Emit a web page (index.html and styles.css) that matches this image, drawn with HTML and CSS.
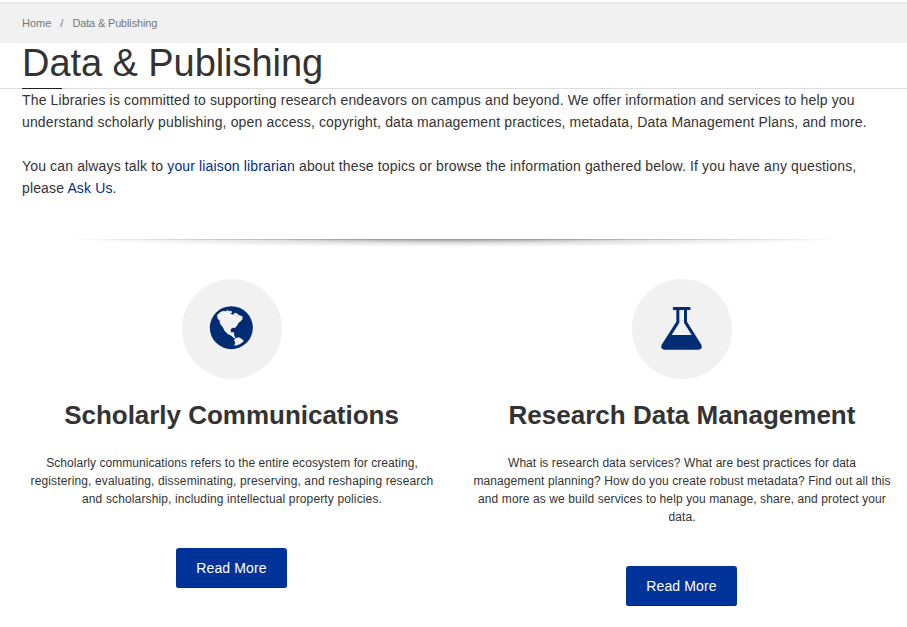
FILE: index.html
```
<!DOCTYPE html>
<html lang="en">
<head>
<meta charset="utf-8">
<title>Data &amp; Publishing</title>
<link rel="stylesheet" href="styles.css">
</head>
<body>
<nav class="breadcrumb"><a href="#">Home</a><span class="sep">/</span><span class="current">Data &amp; Publishing</span></nav>
<header class="page-title"><h1>Data &amp; Publishing</h1></header>
<main>
  <section class="intro">
    <p>The Libraries is committed to supporting research endeavors on campus and beyond. We offer information and services to help you<br>understand scholarly publishing, open access, copyright, data management practices, metadata, Data Management Plans, and more.</p>
    <p>You can always talk to <a href="#">your liaison librarian</a> about these topics or browse the information gathered below. If you have any questions,<br>please <a href="#">Ask Us</a>.</p>
  </section>
  <div class="divider"></div>
  <section class="cards">
    <article class="card">
      <div class="icon">
        <svg viewBox="0 0 150 150" width="50" height="50">
          <circle cx="76" cy="77" r="64.5" fill="#002c73"/>
          <path fill="#f1f1f1" d="M33 40 L43 30 L52 27 L59 28 L65 24 L70 28 L75 26 L79 31 L73 35 L82 38 L85 33 L92 33 L98 39 L109 43 L110 51 L104 58 L97 63 L94 70 L87 78 L80 77 L74 82 L75 91 L84 91 L85 102 L89 108 L84 109 L76 101 L66 97 L56 87 L50 75 L42 65 L41 56 L35 50 Z"/>
          <path fill="#f1f1f1" d="M88 109 L99 106 L111 113 L113 118 L106 124 L98 128 L88 131 L85 130 L88 121 L84 115 Z"/>
        </svg>
      </div>
      <h2 class="tight">Scholarly Communications</h2>
      <p><span class="snug">Scholarly communications refers to the entire ecosystem for creating,</span><br><span class="loose">registering, evaluating, disseminating, preserving, and reshaping research<br>and scholarship, including intellectual property policies.</span></p>
      <a class="button" href="#">Read More</a>
    </article>
    <article class="card">
      <div class="icon">
        <svg viewBox="0 0 150 150" width="50" height="50">
          <path fill="#002c73" fill-rule="evenodd" d="M54 15 H100 Q104 15 104 19.500 Q104 24 100 24 H93 V59 L136 128 Q141 142 127 143 H26 Q12 142 17 128 L61 59 V24 H54 Q50 24 50 19.500 Q50 15 54 15 Z M70 24 V62 L47 99 H107 L84 62 V24 Z"/>
        </svg>
      </div>
      <h2>Research Data Management</h2>
      <p><span class="snug">What is research data services? What are best practices for data</span><br>management planning? How do you create robust metadata? Find out all this<br>and more as we build services to help you manage, share, and protect your<br>data.</p>
      <a class="button" href="#">Read More</a>
    </article>
  </section>
</main>
</body>
</html>
```
FILE: styles.css
```
* { box-sizing: border-box; }
body {
  margin: 0;
  padding-top: 2px;
  background: #fff;
  color: #333;
  font-family: "Liberation Sans", Arial, sans-serif;
  overflow: hidden;
}
a { color: inherit; text-decoration: none; }
.breadcrumb {
  height: 41px;
  padding-left: 22px;
  border-top: 2px solid #e8e8e8;
  background: #f1f1f1;
  color: #777;
  font-size: 11px;
  line-height: 38px;
}
.sep { margin: 0 9px; }
.current { letter-spacing: -0.16px; }
.page-title {
  height: 46px;
  padding-left: 22px;
  border-bottom: 1px solid #ddd;
}
h1 {
  position: relative;
  width: max-content;
  height: 46px;
  margin: 0;
  font-size: 38px;
  font-weight: 400;
  letter-spacing: -0.06px;
  line-height: 40px;
}
h1::after {
  content: "";
  position: absolute;
  left: 0;
  bottom: 0;
  width: 40px;
  height: 1px;
  background: #222;
}
.intro {
  padding-left: 22px;
  font-size: 14px;
  letter-spacing: 0.145px;
  line-height: 22px;
  white-space: nowrap;
}
.intro p { margin: 0 0 22px; }
.intro a { color: #002c8a; }
.divider {
  width: 770px;
  height: 8px;
  margin: 40px 0 32px 70px;
  background:
    linear-gradient(90deg, transparent, #999 50%, transparent) top / 100% 1px no-repeat,
    radial-gradient(ellipse 50% 100% at 50% 0, #999, rgba(170, 170, 170, 0.35) 50%, rgba(170, 170, 170, 0) 100%);
}
.cards {
  display: grid;
  grid-template-columns: 450px 450px;
  margin-left: 7px;
}
.card {
  display: flex;
  flex-direction: column;
  align-items: center;
  text-align: center;
}
.icon {
  display: flex;
  align-items: center;
  justify-content: center;
  width: 100px;
  height: 100px;
  padding: 0 2px 4px 0;
  border-radius: 50%;
  background: #f1f1f1;
}
h2 {
  margin: 21px 0 24px;
  font-size: 26px;
  line-height: 30px;
}
.tight {
  margin-right: 1px;
  letter-spacing: -0.02px;
}
.card p {
  margin: 0 0 40px;
  font-size: 12px;
  letter-spacing: 0.105px;
  line-height: 18px;
  white-space: nowrap;
}
.card .snug { letter-spacing: 0.06px; }
.card .loose { letter-spacing: 0.135px; }
.button {
  width: 111px;
  height: 40px;
  margin-right: 1px;
  border-radius: 3px;
  background: #039;
  box-shadow: inset 0 -1px 0 #002c84;
  color: #fff;
  font-size: 14px;
  letter-spacing: 0.15px;
  line-height: 40px;
}
```
